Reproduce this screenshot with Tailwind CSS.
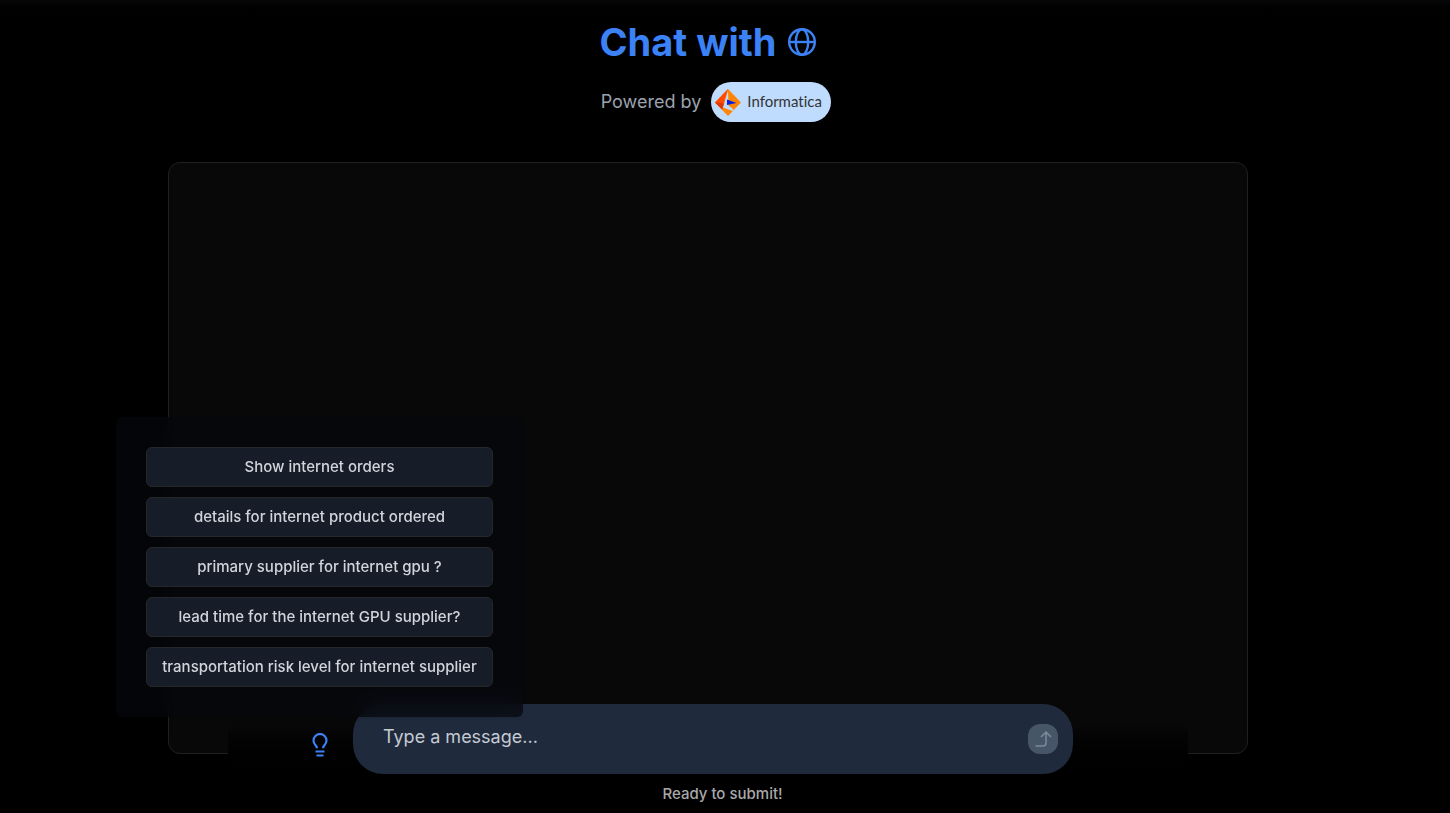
<!DOCTYPE html>
<html lang="en">
<head>
<meta charset="utf-8">
<meta name="viewport" content="width=device-width, initial-scale=1">
<title>Chat with Informatica</title>
<script src="https://cdn.jsdelivr.net/npm/@tailwindcss/browser@4"></script>
</head>
<body class="bg-black font-['Inter',sans-serif] text-[#d1d5db]">
<main class="relative flex h-screen flex-col items-center overflow-hidden bg-linear-to-b from-[#070709] to-black to-[16px] pr-[34px]">
  <header class="flex flex-col items-center pt-3">
    <h1 class="flex items-center gap-2.5 text-[38px] leading-[60px] font-bold text-[#3b82f6]">
      Chat with
      <svg class="size-[30px]" viewBox="0 0 30 30" fill="none" stroke="currentColor" stroke-width="2.400" aria-hidden="true">
        <circle cx="15" cy="15" r="12.800"/>
        <ellipse cx="15" cy="15" rx="6.200" ry="12.800"/>
        <path d="M2 15h26"/>
      </svg>
    </h1>
    <div class="mt-2.5 flex items-center gap-2.5 pl-4 text-lg text-[#9ca3af]">
      <span>Powered by</span>
      <span class="flex h-10 w-[120px] items-center gap-1.5 rounded-full bg-[#bfdbfe] pl-1 text-[#333]">
        <svg class="h-[27px] w-[26px] shrink-0" viewBox="0 0 26 27" aria-hidden="true">
          <path fill="#ff8508" d="M13 0l13 13.500L13 27 0 13.500z"/>
          <path fill="#ff4a00" d="M13 0 0 13.500l7 5.500z"/>
          <path fill="#d9380b" d="M0 13.500l7 7 2.500-6z"/>
          <path fill="#bfdbfe" d="M13 1.500 8 18.500l11 4-1.500-3-4-3z"/>
          <path fill="#0a1fe0" d="M12 10.500l9.500 3.500-9.500 2z"/>
        </svg>
        <span class="font-['Lato',sans-serif] text-[15px] [font-variant-ligatures:none]">Informatica</span>
      </span>
    </div>
  </header>

  <section class="mt-10 mb-[59px] w-full max-w-[1080px] flex-1 rounded-xl border border-[#202020] bg-[#080808]" aria-label="Conversation"></section>

  <footer class="absolute inset-x-0 bottom-0 mr-[34px] flex justify-center">
    <div class="w-full max-w-[960px] bg-linear-to-b from-[#080808] from-[20px] to-black to-[80px]">
      <form class="flex items-center gap-[18px] pl-[76px]">
        <div class="relative mt-2.5 flex">
          <button type="button" class="flex h-[30px] w-[31px] items-center justify-center pt-px pl-px text-[#3b82f6]" aria-label="Suggestions">
            <svg class="h-6 w-4" viewBox="0 0 16 24" fill="none" stroke="currentColor" stroke-width="2.200" aria-hidden="true">
              <path d="M5 15.200C5 12.600 1.500 11.700 1.500 7.500a6.500 6.500 0 0 1 13 0C14.500 11.700 11 12.600 11 15.200"/>
              <path d="M3.500 18.500h9M4.500 22.500h7"/>
            </svg>
          </button>
          <div class="absolute bottom-full -left-[188px] z-10 mb-3 flex w-[407px] flex-col gap-2.5 rounded-md bg-[#05070d]/70 p-[30px] shadow-sm backdrop-blur-[10px]">
            <button type="button" class="h-10 rounded-md border border-[#262729] bg-[#161d28] px-[15px] text-[15px] font-medium whitespace-nowrap">Show internet orders</button>
            <button type="button" class="h-10 rounded-md border border-[#262729] bg-[#161d28] px-[15px] text-[15px] font-medium whitespace-nowrap">details for internet product ordered</button>
            <button type="button" class="h-10 rounded-md border border-[#262729] bg-[#161d28] px-[15px] text-[15px] font-medium whitespace-nowrap">primary supplier for internet gpu ?</button>
            <button type="button" class="h-10 rounded-md border border-[#262729] bg-[#161d28] px-[15px] text-[15px] font-medium whitespace-nowrap">lead time for the internet GPU supplier?</button>
            <button type="button" class="h-10 rounded-md border border-[#262729] bg-[#161d28] px-[15px] text-[15px] font-medium whitespace-nowrap">transportation risk level for internet supplier</button>
          </div>
        </div>
        <div class="flex h-[70px] w-[720px] items-center rounded-[30px] bg-[#1f2a3c] pr-[15px] pl-[30px]">
          <input type="text" aria-label="Message" placeholder="Type a message..." class="mb-1 min-w-0 flex-1 bg-transparent text-lg outline-none placeholder:text-[#c5cad2]">
          <button type="submit" class="flex size-[30px] items-center justify-center rounded-[12px] bg-[#475569] text-[#7f8a9a]" aria-label="Send">
            <svg class="size-[18px]" viewBox="0 0 18 18" fill="none" stroke="currentColor" stroke-width="1.500" aria-hidden="true">
              <path d="M1.500 16h7.500a3 3 0 0 0 3-3V2.500M7 7l5-5 5 5"/>
            </svg>
          </button>
        </div>
      </form>
      <p class="pt-2 pb-[7px] pl-[29px] text-center text-[15px] leading-6 font-medium text-[#a9a9a9]">Ready to submit!</p>
    </div>
  </footer>
</main>
</body>
</html>
